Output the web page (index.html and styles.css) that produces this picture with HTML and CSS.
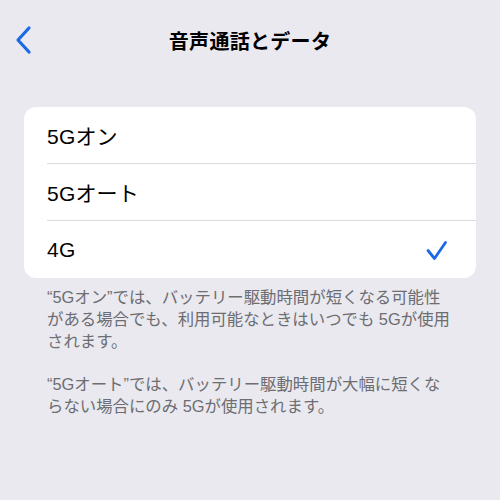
FILE: index.html
```html
<!DOCTYPE html>
<html lang="ja">
<head>
<meta charset="utf-8">
<link rel="stylesheet" href="styles.css">
</head>
<body>
<div class="page">
  <header class="nav">
    <svg class="back" width="20" height="30" viewBox="0 0 20 30"><path d="M14 3 L3 15 L14 27" fill="none" stroke="#1a6ae6" stroke-width="3.2" stroke-linecap="round" stroke-linejoin="round"/></svg>
    <h1 class="title">音声通話とデータ</h1>
  </header>
  <div class="card">
    <div class="row"><span class="label">5Gオン</span></div>
    <div class="row"><span class="label">5Gオート</span></div>
    <div class="row"><span class="label">4G</span>
      <svg class="check" width="22" height="22" viewBox="0 0 22 22"><path d="M2 10.5 L8.5 18.5 L19.5 2.5" fill="none" stroke="#1a6ae6" stroke-width="2.8" stroke-linecap="round" stroke-linejoin="round"/></svg>
    </div>
  </div>
  <p class="note">“5Gオン”では、バッテリー駆動時間が短くなる可能性<br>がある場合でも、利用可能なときはいつでも 5Gが使用<br>されます。</p>
  <p class="note">“5Gオート”では、バッテリー駆動時間が大幅に短くな<br>らない場合にのみ 5Gが使用されます。</p>
</div>
</body>
</html>
```
FILE: styles.css
```css
html, body {
  margin: 0;
  padding: 0;
  background: #e9e9ef;
}
body {
  font-family: "Liberation Sans", "Noto Sans CJK JP", sans-serif;
  color: #000;
  width: 500px;
  height: 500px;
  overflow: hidden;
}
.page {
  padding: 0 24px;
}
.nav {
  position: relative;
  height: 80px;
  display: flex;
  align-items: center;
  justify-content: center;
  margin-bottom: 27px;
}
.back {
  position: absolute;
  left: -9px;
  top: 25px;
}
.title {
  margin: 0;
  font-size: 20px;
  font-weight: 700;
  letter-spacing: 0.3px;
}
.card {
  background: #fff;
  border-radius: 12px;
  overflow: hidden;
}
.row {
  height: 57px;
  margin-left: 23px;
  padding-right: 28px;
  display: flex;
  align-items: center;
  justify-content: space-between;
  border-bottom: 1.5px solid #dcdce0;
  box-sizing: border-box;
}
.row:last-child {
  border-bottom: none;
}
.label {
  font-size: 21px;
  letter-spacing: 0.2px;
}
.check {
  margin-top: 2px;
}
.note {
  margin: 8px 0 0 23px;
  font-size: 16.4px;
  line-height: 22px;
  color: #6d6d72;
}
.note + .note {
  margin-top: 21px;
}
```
